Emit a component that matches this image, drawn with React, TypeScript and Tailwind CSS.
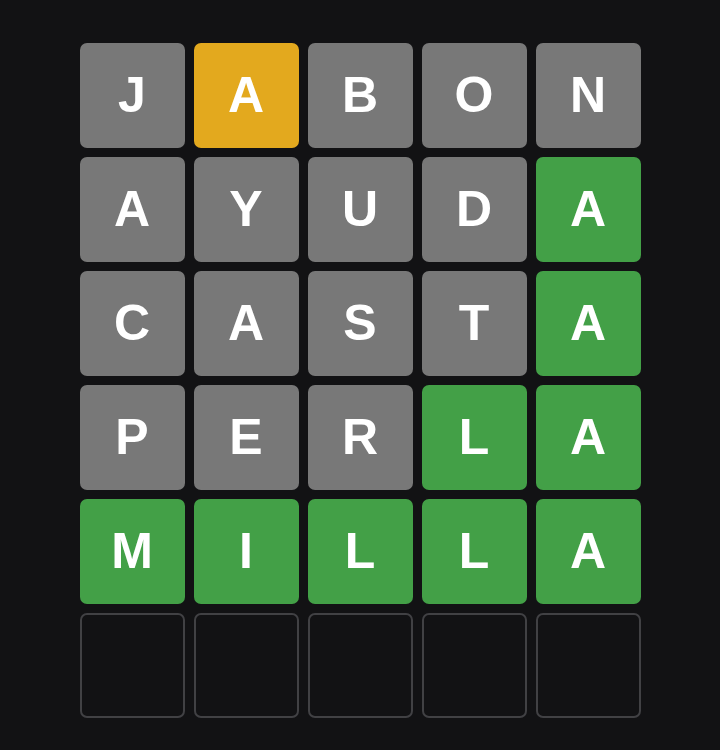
import React from "react";

type State = "gray" | "yellow" | "green" | "empty";

const rows: { letter: string; state: State }[][] = [
  [
    { letter: "J", state: "gray" },
    { letter: "A", state: "yellow" },
    { letter: "B", state: "gray" },
    { letter: "O", state: "gray" },
    { letter: "N", state: "gray" },
  ],
  [
    { letter: "A", state: "gray" },
    { letter: "Y", state: "gray" },
    { letter: "U", state: "gray" },
    { letter: "D", state: "gray" },
    { letter: "A", state: "green" },
  ],
  [
    { letter: "C", state: "gray" },
    { letter: "A", state: "gray" },
    { letter: "S", state: "gray" },
    { letter: "T", state: "gray" },
    { letter: "A", state: "green" },
  ],
  [
    { letter: "P", state: "gray" },
    { letter: "E", state: "gray" },
    { letter: "R", state: "gray" },
    { letter: "L", state: "green" },
    { letter: "A", state: "green" },
  ],
  [
    { letter: "M", state: "green" },
    { letter: "I", state: "green" },
    { letter: "L", state: "green" },
    { letter: "L", state: "green" },
    { letter: "A", state: "green" },
  ],
  [
    { letter: "", state: "empty" },
    { letter: "", state: "empty" },
    { letter: "", state: "empty" },
    { letter: "", state: "empty" },
    { letter: "", state: "empty" },
  ],
];

const tileClass: Record<State, string> = {
  gray: "bg-[#787878]",
  yellow: "bg-[#e3a91e]",
  green: "bg-[#43a047]",
  empty: "border-2 border-[#414144]",
};

const App: React.FC = () => {
  return (
    <div
      className="min-h-[750px] w-full bg-[#121214] pt-[43px]"
      style={{ fontFamily: '"Liberation Sans", Arial, sans-serif' }}
    >
      <div className="mx-auto grid w-[561px] grid-cols-5 gap-[9px]">
        {rows.flat().map((tile, i) => (
          <div
            key={i}
            className={`flex h-[105px] w-[105px] items-center justify-center rounded-[7px] text-[50px] font-bold text-white ${tileClass[tile.state]}`}
          >
            {tile.letter}
          </div>
        ))}
      </div>
    </div>
  );
};

export default App;
